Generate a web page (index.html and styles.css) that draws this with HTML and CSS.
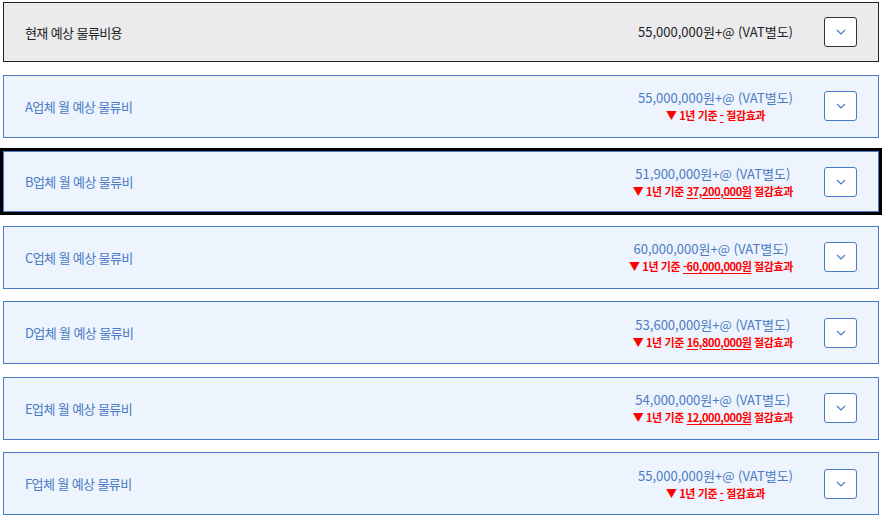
FILE: index.html
```html
<!DOCTYPE html>
<html lang="ko">
<head>
  <meta charset="UTF-8">
  <meta name="viewport" content="width=device-width, initial-scale=1.0">
  <title>물류비용 비교</title>
  <link rel="stylesheet" href="styles.css">
</head>
<body>

  <div class="cost-list">
    <div class="cost-row current">
      <div class="label">현재 예상 물류비용</div>
      <div class="price">
        <p class="amount">55,000,000원+@ (VAT별도)</p>
      </div>
      <button class="toggle" type="button"><svg width="10" height="6" viewBox="0 0 10 6"><polyline points="1,1 5,5 9,1"/></svg></button>
    </div>

    <div class="cost-row">
      <div class="label">A업체 월 예상 물류비</div>
      <div class="price">
        <p class="amount">55,000,000원+@ (VAT별도)</p>
        <p class="saving"><span class="arrow">▼</span> 1년 기준 <u>-</u> 절감효과</p>
      </div>
      <button class="toggle" type="button"><svg width="10" height="6" viewBox="0 0 10 6"><polyline points="1,1 5,5 9,1"/></svg></button>
    </div>

    <div class="cost-row selected">
      <div class="label">B업체 월 예상 물류비</div>
      <div class="price">
        <p class="amount">51,900,000원+@ (VAT별도)</p>
        <p class="saving"><span class="arrow">▼</span> 1년 기준 <u>37,200,000원</u> 절감효과</p>
      </div>
      <button class="toggle" type="button"><svg width="10" height="6" viewBox="0 0 10 6"><polyline points="1,1 5,5 9,1"/></svg></button>
    </div>

    <div class="cost-row">
      <div class="label">C업체 월 예상 물류비</div>
      <div class="price">
        <p class="amount">60,000,000원+@ (VAT별도)</p>
        <p class="saving"><span class="arrow">▼</span> 1년 기준 <u>-60,000,000원</u> 절감효과</p>
      </div>
      <button class="toggle" type="button"><svg width="10" height="6" viewBox="0 0 10 6"><polyline points="1,1 5,5 9,1"/></svg></button>
    </div>

    <div class="cost-row">
      <div class="label">D업체 월 예상 물류비</div>
      <div class="price">
        <p class="amount">53,600,000원+@ (VAT별도)</p>
        <p class="saving"><span class="arrow">▼</span> 1년 기준 <u>16,800,000원</u> 절감효과</p>
      </div>
      <button class="toggle" type="button"><svg width="10" height="6" viewBox="0 0 10 6"><polyline points="1,1 5,5 9,1"/></svg></button>
    </div>

    <div class="cost-row">
      <div class="label">E업체 월 예상 물류비</div>
      <div class="price">
        <p class="amount">54,000,000원+@ (VAT별도)</p>
        <p class="saving"><span class="arrow">▼</span> 1년 기준 <u>12,000,000원</u> 절감효과</p>
      </div>
      <button class="toggle" type="button"><svg width="10" height="6" viewBox="0 0 10 6"><polyline points="1,1 5,5 9,1"/></svg></button>
    </div>

    <div class="cost-row">
      <div class="label">F업체 월 예상 물류비</div>
      <div class="price">
        <p class="amount">55,000,000원+@ (VAT별도)</p>
        <p class="saving"><span class="arrow">▼</span> 1년 기준 <u>-</u> 절감효과</p>
      </div>
      <button class="toggle" type="button"><svg width="10" height="6" viewBox="0 0 10 6"><polyline points="1,1 5,5 9,1"/></svg></button>
    </div>
  </div>

</body>
</html>
```

FILE: styles.css
```css
body {
  font-family: 'Noto Sans CJK KR', 'Noto Sans', sans-serif;
  background: #fff;
  margin: 0;
  padding: 0;
}

.cost-list {
  display: flex;
  flex-direction: column;
  gap: 12.5px;
  width: 876px;
  padding: 2px 0 0 3px;
}

.cost-row {
  display: flex;
  align-items: center;
  height: 63px;
  box-sizing: border-box;
  padding: 0 21px 0 21px;
  background: #edf4fd;
  border: 1px solid #4a7bc4;
  color: #4a7bc4;
}

.cost-row.current {
  height: 60px;
  background: #ebebed;
  border-color: #222;
  color: #222;
}

.cost-row.selected {
  box-shadow: 0 0 0 3px #000;
  height: 61px;
  margin: 1px 0;
}

.label {
  flex: 1;
  font-size: 13px;
  letter-spacing: -0.6px;
}

.price {
  text-align: center;
  margin-right: 31px;
}

.price p {
  margin: 0;
}

.amount {
  font-size: 13px;
  line-height: 18px;
}

.saving {
  font-size: 11px;
  line-height: 16px;
  font-weight: bold;
  color: #ff0000;
  letter-spacing: -0.4px;
}

.saving .arrow {
  font-size: 11px;
}

.saving u {
  text-underline-offset: 2px;
}

.toggle {
  width: 33px;
  height: 30px;
  padding: 0;
  background: #fff;
  border: 1px solid #4a7bc4;
  border-radius: 3px;
  display: flex;
  align-items: center;
  justify-content: center;
  cursor: pointer;
}

.current .toggle {
  border-color: #333;
}

.toggle polyline {
  fill: none;
  stroke: #4a7bc4;
  stroke-width: 1.2;
}
```
